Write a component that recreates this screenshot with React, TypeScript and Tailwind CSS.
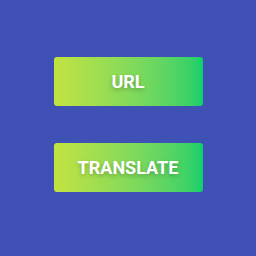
export default function App() {
  const btn =
    "flex h-[49px] w-[149px] items-center justify-center rounded-[3px] bg-gradient-to-r from-[#c2e33f] to-[#0bd06a] text-[18px] font-bold text-white [text-shadow:0_2px_4px_rgba(0,0,0,0.25)]";
  return (
    <div
      className="flex h-screen w-full flex-col items-center gap-[37px] bg-[#3f51b5] pt-[57px]"
      style={{ fontFamily: "Roboto, sans-serif" }}
    >
      <button className={btn}>URL</button>
      <button className={btn}>TRANSLATE</button>
    </div>
  );
}
